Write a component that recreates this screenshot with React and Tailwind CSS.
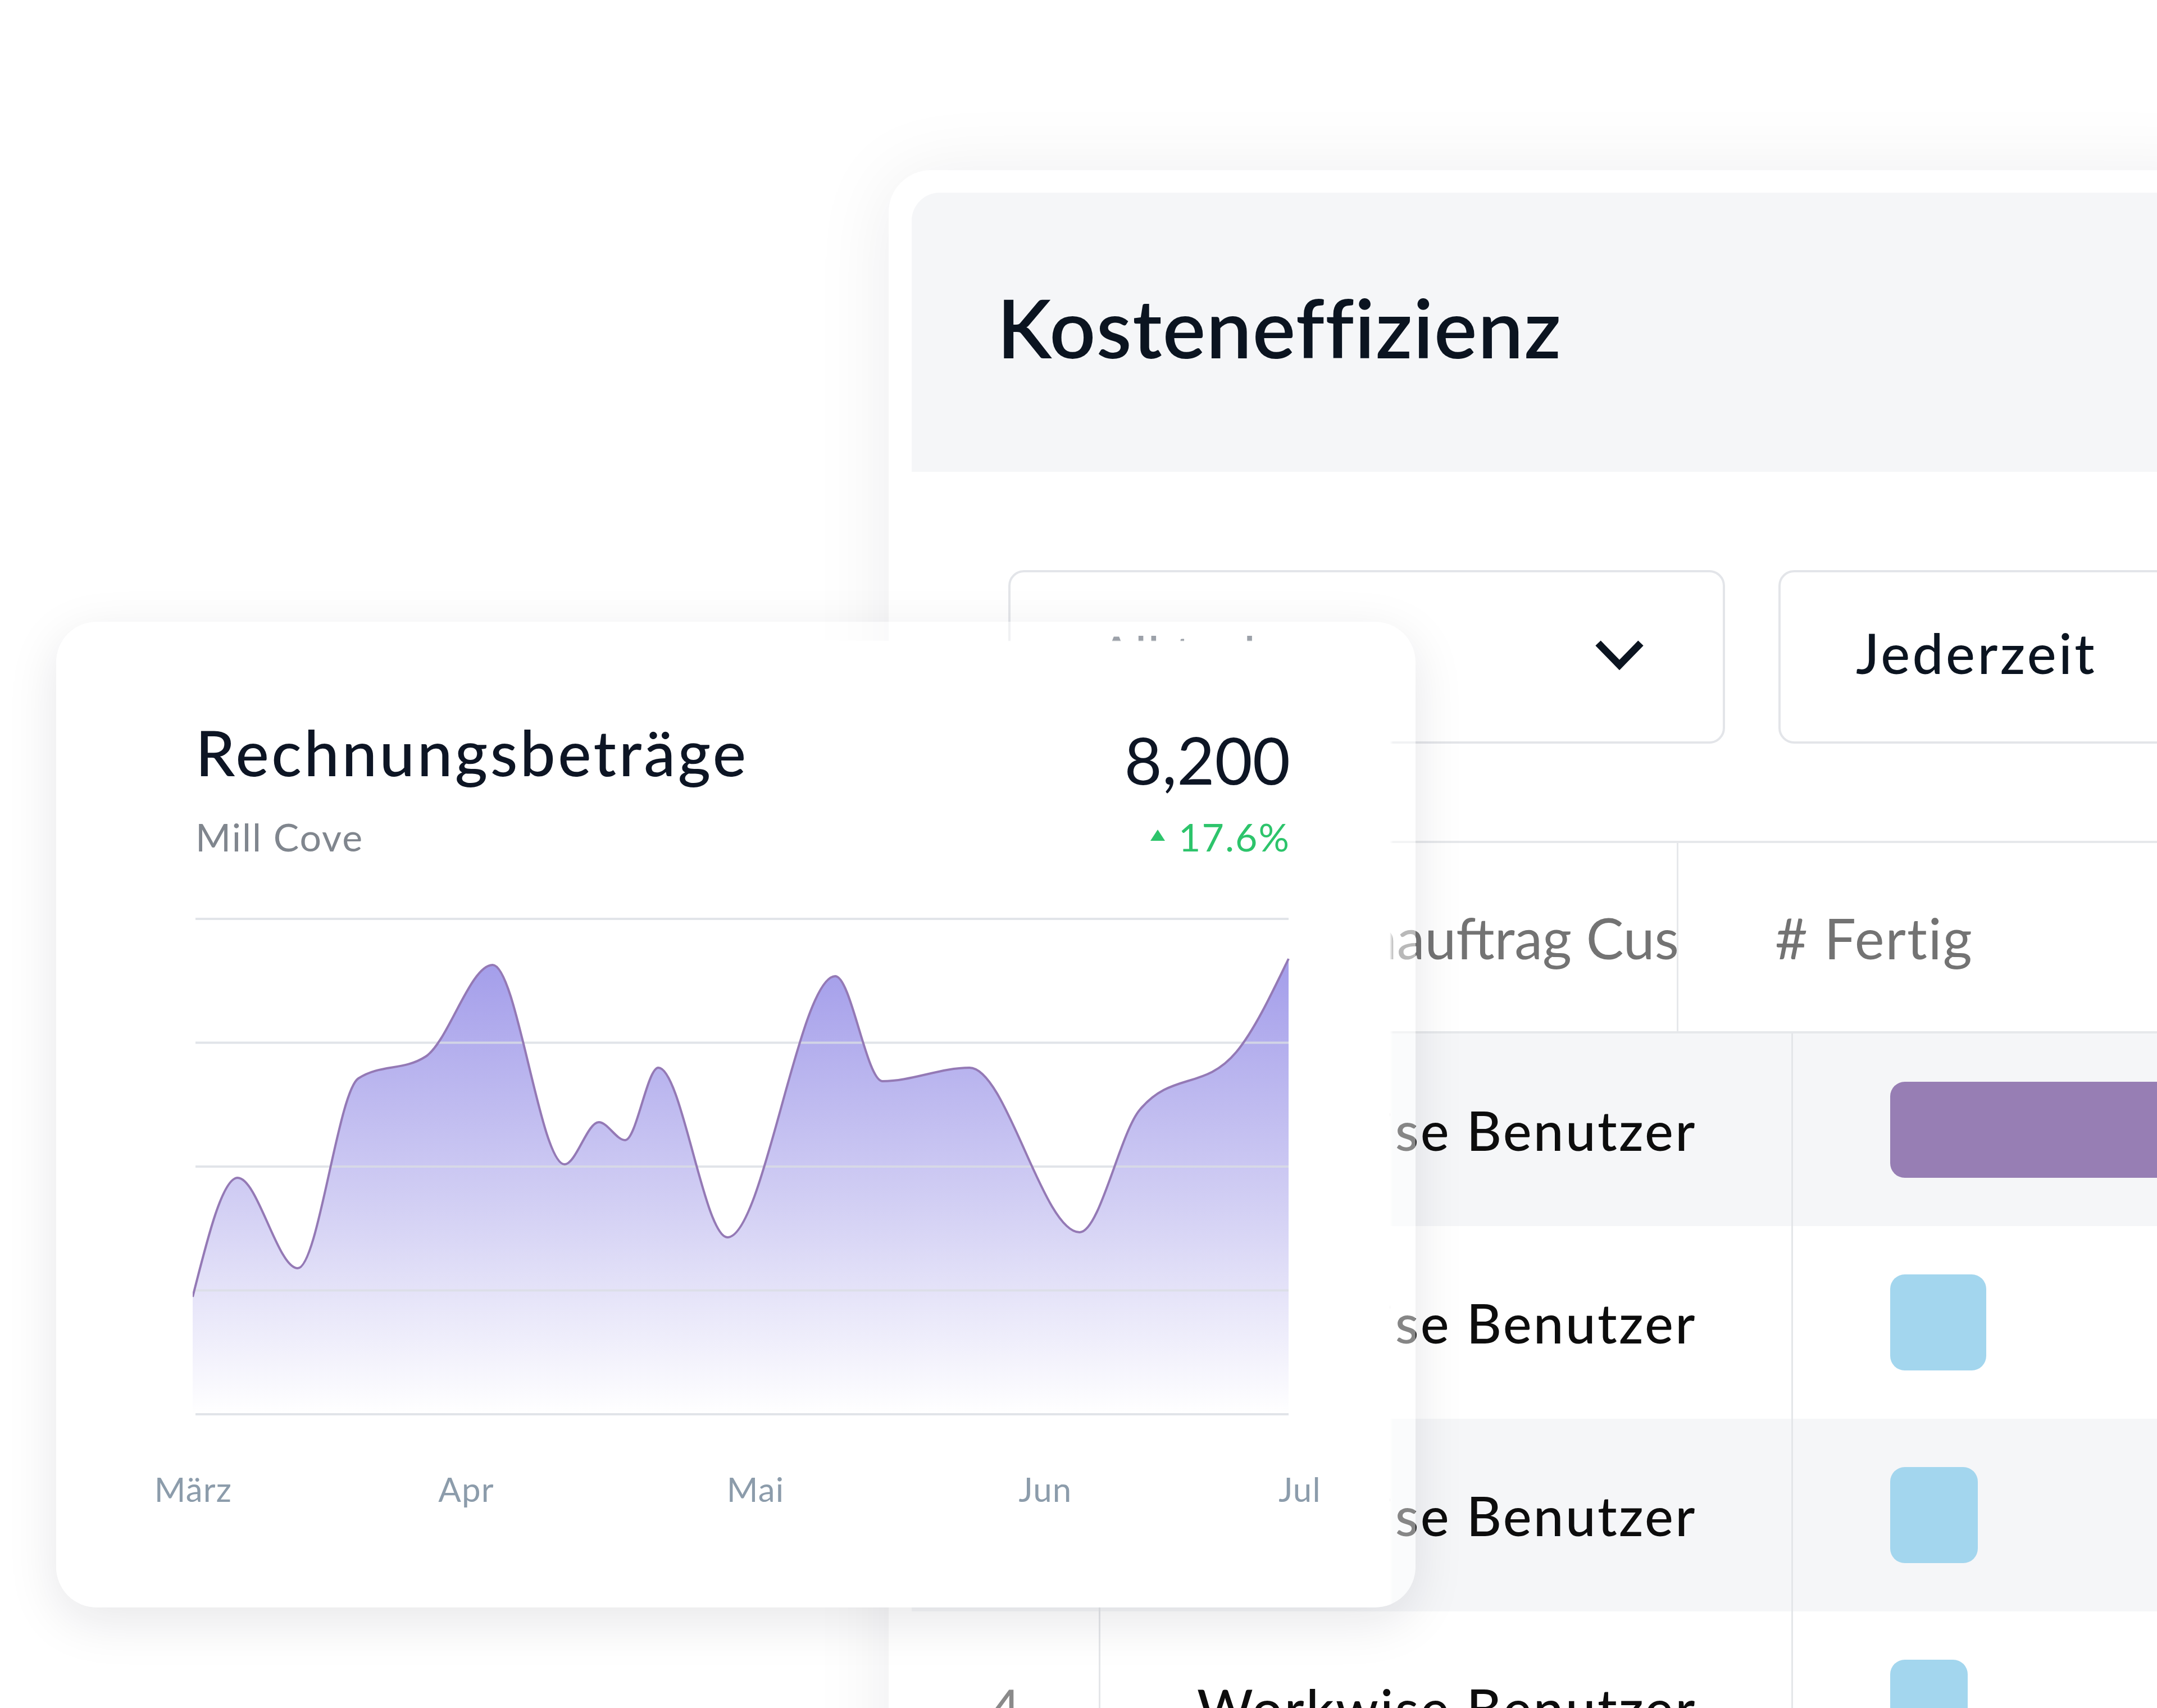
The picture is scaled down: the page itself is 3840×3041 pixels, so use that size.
import React from 'react';

const points = [
  [0, 673], [80, 461], [187, 622], [295, 284], [415, 245], [534, 82],
  [662, 437], [723, 362], [770, 394], [829, 265], [952, 567], [1144, 102],
  [1228, 289], [1383, 265], [1579, 558], [1686, 340], [1858, 237], [1951, 71],
];

// monotone cubic, same idea as d3's curveMonotoneX
const monotonePath = (p) => {
  const n = p.length;
  const h = [];
  const s = [];
  for (let i = 0; i < n - 1; i++) {
    h[i] = p[i + 1][0] - p[i][0];
    s[i] = (p[i + 1][1] - p[i][1]) / h[i];
  }
  const m = new Array(n).fill(0);
  for (let i = 1; i < n - 1; i++) {
    const pp = (s[i - 1] * h[i] + s[i] * h[i - 1]) / (h[i - 1] + h[i]);
    m[i] = (Math.sign(s[i - 1]) + Math.sign(s[i])) *
      Math.min(Math.abs(s[i - 1]), Math.abs(s[i]), 0.5 * Math.abs(pp)) || 0;
  }
  m[0] = (3 * s[0] - m[1]) / 2;
  m[n - 1] = (3 * s[n - 2] - m[n - 2]) / 2;
  let d = `M${p[0][0]},${p[0][1]}`;
  for (let i = 0; i < n - 1; i++) {
    const dx = h[i] / 3;
    d += ` C${p[i][0] + dx},${p[i][1] + m[i] * dx} ${p[i + 1][0] - dx},${p[i + 1][1] - m[i + 1] * dx} ${p[i + 1][0]},${p[i + 1][1]}`;
  }
  return d;
};

const linePath = monotonePath(points);
const areaPath = `${linePath} L1951,882 L0,882 Z`;
const gridY = [0, 220.5, 441, 661.5, 882];

const rows = [
  { n: 1, bar: 'w-[1200px] bg-[#977eb4]' },
  { n: 2, bar: 'w-[171px] bg-[#a3d6ee]' },
  { n: 3, bar: 'w-[156px] bg-[#a3d6ee]' },
  { n: 4, bar: 'w-[138px] bg-[#a3d6ee]' },
];

const Chevron = () => (
  <svg width="90" height="58" viewBox="0 0 90 58">
    <polyline points="7,8 45,47 83,8" fill="none" stroke="#0b1420" strokeWidth="13" strokeLinejoin="miter" />
  </svg>
);

const ChartCard = () => (
  <div className="absolute left-[100px] top-[1107px] z-10 w-[2420px] h-[1755px]">
    <div className="absolute inset-0 rounded-[72px] shadow-[0_24px_90px_rgba(15,23,42,0.10)]" />
    <div className="absolute inset-0 rounded-[72px] bg-white [mask-image:linear-gradient(to_bottom,rgba(0,0,0,0.45)_33px,#000_35px),linear-gradient(to_left,rgba(0,0,0,0.5)_40px,#000_46px)] [mask-composite:intersect]" />
    <div className="relative pl-[243px] pr-[223px]">
      <div className="ml-[5px] flex justify-between">
        <div>
          <div className="mt-[176px] text-[112px] leading-none font-medium tracking-[0.04em] text-[#0d1524]">Rechnungsbeträge</div>
          <div className="mt-[61px] text-[68px] leading-none tracking-[0.03em] text-[#80868e]">Mill Cove</div>
        </div>
        <div className="flex flex-col items-end">
          <div className="mt-[188px] text-[116px] leading-none text-[#0d1524]">8,200</div>
          <div className="mt-[45px] flex items-center text-[68px] leading-none tracking-[0.03em] text-[#2dc46b]">
            <span className="mr-[24px] mb-[6px] w-0 h-0 border-l-[13px] border-r-[13px] border-b-[20px] border-l-transparent border-r-transparent border-b-[#2dc46b]" />
            17.6%
          </div>
        </div>
      </div>

      <svg className="mt-[109px] block" width="1953" height="888" viewBox="0 -3 1953 888">
        <defs>
          <linearGradient id="area" x1="0" y1="0" x2="0" y2="1">
            <stop offset="0" stopColor="#a39dea" />
            <stop offset="0.55" stopColor="#d3d0f4" />
            <stop offset="1" stopColor="#ffffff" />
          </linearGradient>
        </defs>
        <path d={areaPath} fill="url(#area)" />
        {gridY.map((y) => (
          <line key={y} x1="5" x2="1951" y1={y} y2={y} stroke="#d9dde3" strokeOpacity="0.8" strokeWidth="4" />
        ))}
        <path d={linePath} fill="none" stroke="#9479b5" strokeWidth="4" />
      </svg>

      <div className="mt-[100px] -ml-[149px] flex text-[60px] leading-none tracking-[0.02em] text-[#8c9cab]">
        <span className="w-[300px] shrink-0 text-center">März</span>
        <span className="ml-[186px] w-[300px] shrink-0 text-center">Apr</span>
        <span className="ml-[215px] w-[300px] shrink-0 text-center">Mai</span>
        <span className="ml-[216px] w-[300px] shrink-0 text-center">Jun</span>
        <span className="ml-[153px] w-[300px] shrink-0 text-center">Jul</span>
      </div>
    </div>
  </div>
);

export default function App() {
  return (
    <div className="relative w-[3840px] h-[3041px] overflow-hidden bg-white font-['Lato','Noto_Sans',sans-serif]">
      <div className="pl-[1582px] pt-[303px]">
        <div className="w-[2400px] h-[2900px] rounded-[75px] bg-white shadow-[0_10px_140px_rgba(15,23,42,0.08)] pl-[41px] pt-[40px]">
          <div className="h-[497px] rounded-t-[50px] bg-[#f5f6f8] pl-[152px] pt-[168px]">
            <h1 className="text-[144px] leading-none font-semibold tracking-[0.01em] text-[#0b1420]">Kosteneffizienz</h1>
          </div>

          <div className="mt-[175px] pl-[172px] flex gap-[95px]">
            <div className="w-[1276px] h-[309px] shrink-0 rounded-[28px] border-[4px] border-[#e3e5e9] flex items-center justify-between pl-[156px] pr-[139px] pb-[8px]">
              <span className="text-[96px] leading-none text-[#4b5563]">All tasks</span>
              <Chevron />
            </div>
            <div className="w-[900px] h-[309px] shrink-0 rounded-[28px] border-[4px] border-[#e3e5e9] flex items-center pl-[134px] pb-[16px]">
              <span className="text-[98px] leading-none font-medium tracking-[0.045em] text-[#0b1420]">Jederzeit</span>
            </div>
          </div>

          <div className="mt-[173px]">
            <div className="h-[343px] border-y-[4px] border-[#e6e8eb] flex items-center text-[100px] leading-none text-[#737373]">
              <div className="w-[336px] shrink-0 text-center">#</div>
              <div className="w-[1029px] shrink-0 h-full flex items-center border-r-[3px] border-[#e6e8eb] pl-[188px] overflow-hidden whitespace-nowrap">
                Kundenauftrag Customer
              </div>
              <div className="pl-[172px] tracking-[0.02em]"># Fertig</div>
            </div>

            {rows.map((r) => (
              <div
                key={r.n}
                className={`h-[343px] grid grid-cols-[336px_1233px_1fr] ${r.n % 2 === 1 ? 'bg-[#f5f6f8]' : 'bg-white'}`}
              >
                <div className="flex items-center justify-center border-r-[3px] border-[#e4e6e9] text-[96px] leading-none text-[#8a8a8a]">
                  {r.n}
                </div>
                <div className="flex items-center border-r-[3px] border-[#e4e6e9] pl-[172px] text-[96px] leading-none font-medium tracking-[0.035em] text-[#0d0d0d] whitespace-nowrap">
                  Workwise Benutzer
                </div>
                <div className="flex items-center pl-[173px]">
                  <div className={`h-[171px] shrink-0 rounded-[26px] ${r.bar}`} />
                </div>
              </div>
            ))}
          </div>
        </div>
      </div>

      <ChartCard />
    </div>
  );
}
